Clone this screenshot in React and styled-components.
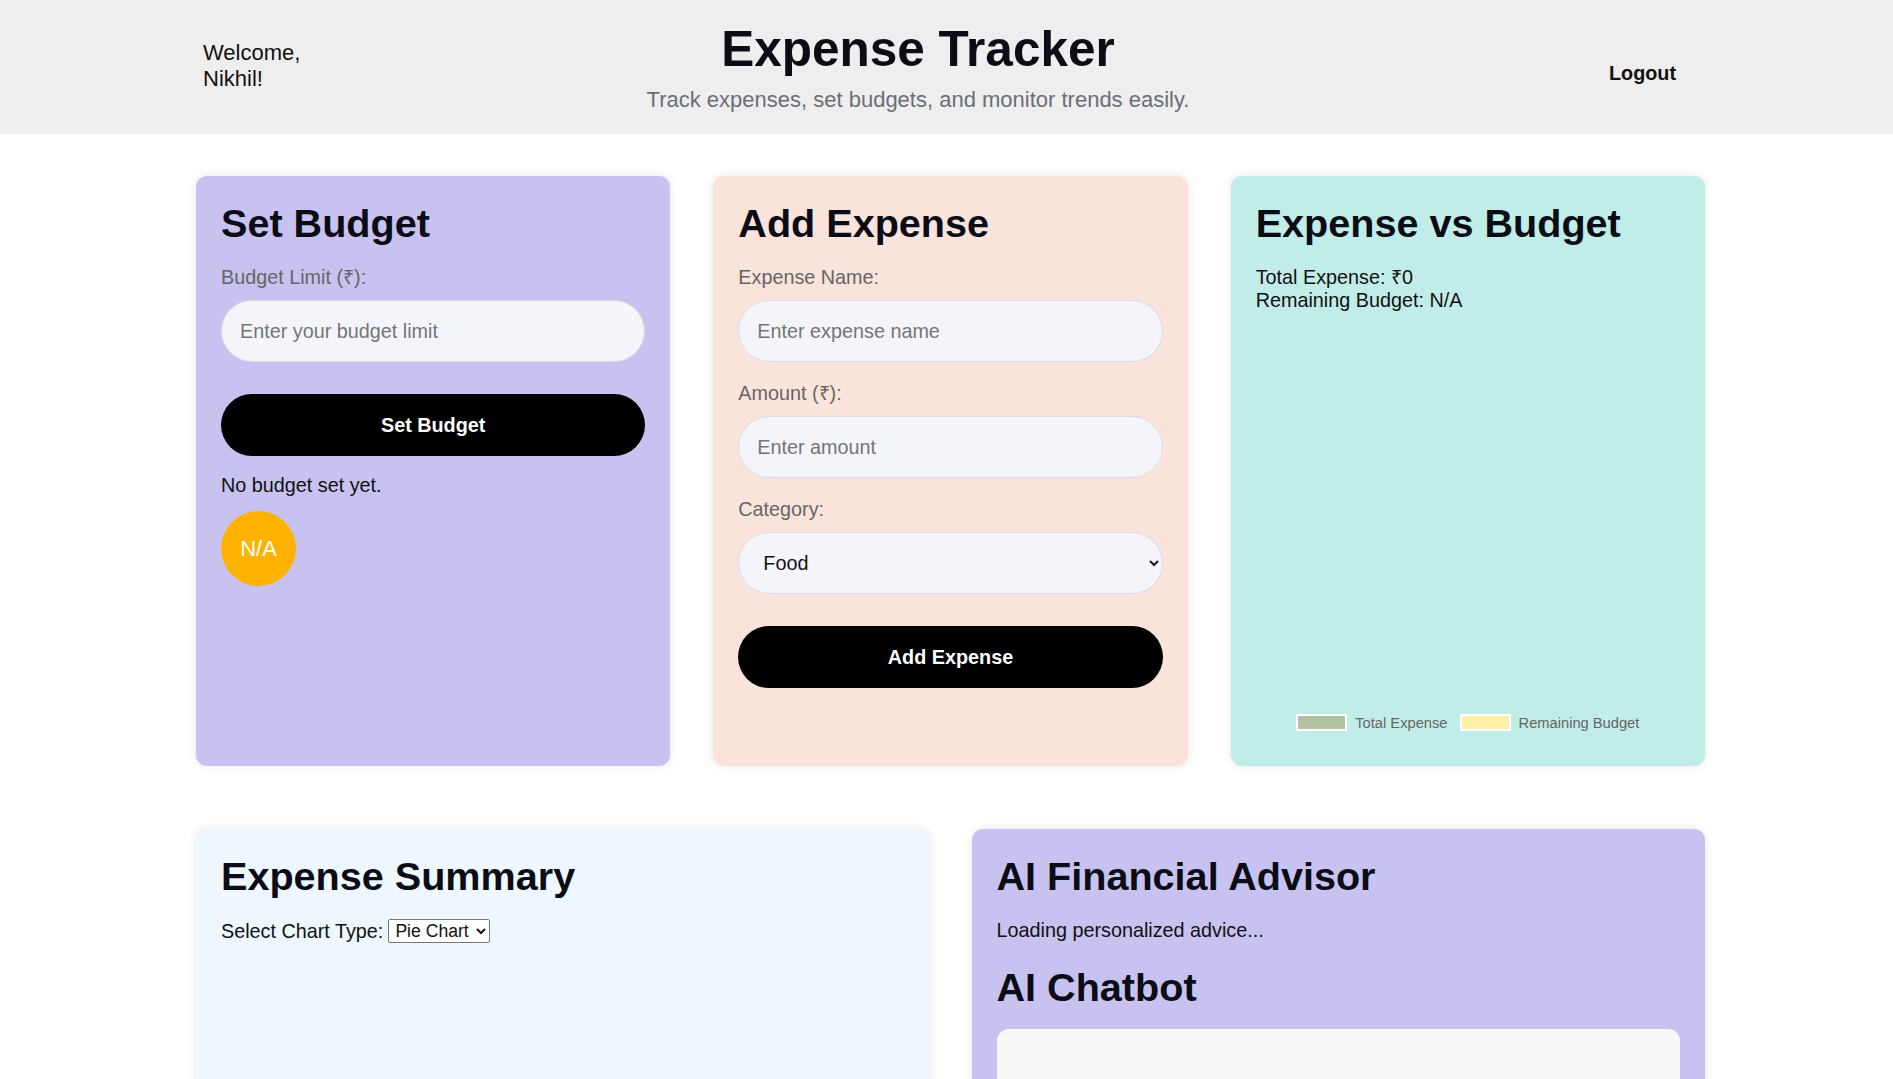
import React, { useState } from "react";
import styled, { createGlobalStyle } from "styled-components";

const GlobalStyle = createGlobalStyle`
  body {
    margin: 0;
    background: #ffffff;
    font-family: "Liberation Sans", Arial, sans-serif;
    color: #111;
  }
  * {
    box-sizing: border-box;
  }
`;

const Header = styled.header`
  display: flex;
  justify-content: space-between;
  align-items: center;
  background: #eeeeee;
  padding: 20px 217px 21px 203px;
`;

const Welcome = styled.div`
  width: 100px;
  margin-top: -2px;
  font-size: 22px;
  line-height: 1.15;
  color: #111;
`;

const TitleBlock = styled.div`
  text-align: center;

  h1 {
    margin: 0 0 10px;
    font-size: 49.5px;
    font-weight: 700;
    color: #0a0d16;
  }
  p {
    margin: 0;
    font-size: 22px;
    color: #6b6e76;
  }
`;

const RightSide = styled.div`
  width: 143px;
  display: flex;
  justify-content: flex-end;
  margin-top: 14px;
`;

const LogoutButton = styled.button`
  background: transparent;
  border: 0;
  padding: 0;
  font-family: inherit;
  font-size: 19.8px;
  font-weight: 700;
  color: #111;
  cursor: pointer;
`;

const Main = styled.main`
  width: 1509px;
  margin-left: 196px;
  padding-top: 42px;
`;

const Row = styled.div`
  display: grid;
  grid-template-columns: repeat(${(p) => p.$cols}, 1fr);
  gap: ${(p) => p.$gap}px;
  margin-bottom: 63px;
`;

const Card = styled.section`
  display: flex;
  flex-direction: column;
  background: ${(p) => p.$bg};
  border-radius: 11px;
  padding: 24px 25px;
  box-shadow: 0 0 10px rgba(0, 0, 0, 0.1);
`;

const CardTitle = styled.h2`
  margin: 0 0 ${(p) => p.$mb ?? 20}px;
  font-size: 39.6px;
  font-weight: 700;
  line-height: 46px;
  color: #0a0d16;
`;

const Label = styled.label`
  display: block;
  font-size: 19.8px;
  line-height: 23px;
  height: 23px;
  color: #666;
  margin-bottom: 11px;
`;

const Input = styled.input`
  width: 100%;
  height: 62px;
  border-radius: 31px;
  border: 1px solid #dcdce4;
  background: #f4f5fa;
  padding: 0 18px;
  font-family: inherit;
  font-size: 19.8px;
  color: #111;
  margin: 0 0 20px;
  outline: none;

  &::placeholder {
    color: #757575;
  }
`;

const Select = styled.select`
  width: 100%;
  height: 62px;
  border-radius: 31px;
  border: 1px solid #dcdce4;
  background: #f4f5fa;
  padding: 0 18px 0 20px;
  font-family: inherit;
  font-size: 19.8px;
  color: #111;
  margin: 0 0 20px;
  outline: none;
`;

const BlackButton = styled.button`
  width: 100%;
  height: 62px;
  margin-top: 12px;
  border: 0;
  border-radius: 31px;
  background: #000;
  color: #fff;
  font-family: inherit;
  font-size: 19.8px;
  font-weight: 700;
  cursor: pointer;
`;

const Text = styled.p`
  margin: ${(p) => p.$margin || "0"};
  font-size: 19.8px;
  color: #111;
  line-height: 23px;
`;

const Badge = styled.div`
  width: 75px;
  height: 75px;
  border-radius: 50%;
  background: #ffb300;
  color: #fff;
  font-size: 22px;
  display: flex;
  align-items: center;
  justify-content: center;
`;

const ChartArea = styled.div`
  height: 430px;
  display: flex;
  align-items: flex-end;
  justify-content: center;
  padding-bottom: 11px;
`;

const Legend = styled.div`
  display: flex;
  align-items: center;
  gap: 12px;
`;

const LegendItem = styled.div`
  display: flex;
  align-items: center;
  gap: 8px;
  font-size: 14.7px;
  color: #666;
`;

const Swatch = styled.span`
  display: block;
  width: 51px;
  height: 17px;
  border: 2px solid #fff;
  background: ${(p) => p.$color};
`;

const ChartTypeRow = styled.div`
  display: flex;
  align-items: center;
  gap: 5px;
  font-size: 19.8px;
  line-height: 23px;
  color: #111;
`;

const SmallSelect = styled.select`
  height: 24px;
  font-family: inherit;
  font-size: 17.6px;
  color: #111;
  background: #fff;
  border: 1px solid #767676;
  border-radius: 2px;
  padding: 0 2px;
`;

const ChatBox = styled.div`
  height: 380px;
  background: #f8f8f8;
  border-radius: 12px;
`;

export default function App() {
  const [category, setCategory] = useState("Food");
  const [chartType, setChartType] = useState("pie");

  return (
    <>
      <GlobalStyle />
      <Header>
        <Welcome>Welcome, Nikhil!</Welcome>
        <TitleBlock>
          <h1>Expense Tracker</h1>
          <p>Track expenses, set budgets, and monitor trends easily.</p>
        </TitleBlock>
        <RightSide>
          <LogoutButton>Logout</LogoutButton>
        </RightSide>
      </Header>

      <Main>
        <Row $cols={3} $gap={43}>
          <Card $bg="#c8c2f0">
            <CardTitle>Set Budget</CardTitle>
            <Label>Budget Limit (₹):</Label>
            <Input type="number" placeholder="Enter your budget limit" />
            <BlackButton>Set Budget</BlackButton>
            <Text $margin="18px 0 14px">No budget set yet.</Text>
            <Badge>N/A</Badge>
          </Card>

          <Card $bg="#f9e3db">
            <CardTitle>Add Expense</CardTitle>
            <Label>Expense Name:</Label>
            <Input type="text" placeholder="Enter expense name" />
            <Label>Amount (₹):</Label>
            <Input type="number" placeholder="Enter amount" />
            <Label>Category:</Label>
            <Select value={category} onChange={(e) => setCategory(e.target.value)}>
              <option>Food</option>
              <option>Transport</option>
              <option>Shopping</option>
              <option>Bills</option>
              <option>Other</option>
            </Select>
            <BlackButton>Add Expense</BlackButton>
          </Card>

          <Card $bg="#c0ede7">
            <CardTitle>Expense vs Budget</CardTitle>
            <Text>
              Total Expense: ₹0
              <br />
              Remaining Budget: N/A
            </Text>
            <ChartArea>
              <Legend>
                <LegendItem>
                  <Swatch $color="#b1c29f" />
                  Total Expense
                </LegendItem>
                <LegendItem>
                  <Swatch $color="#fff0a9" />
                  Remaining Budget
                </LegendItem>
              </Legend>
            </ChartArea>
          </Card>
        </Row>

        <Row $cols={2} $gap={42}>
          <Card $bg="#eef6fe">
            <CardTitle>Expense Summary</CardTitle>
            <ChartTypeRow>
              Select Chart Type:
              <SmallSelect value={chartType} onChange={(e) => setChartType(e.target.value)}>
                <option value="pie">Pie Chart</option>
                <option value="bar">Bar Chart</option>
              </SmallSelect>
            </ChartTypeRow>
          </Card>

          <Card $bg="#c8c2f0">
            <CardTitle>AI Financial Advisor</CardTitle>
            <Text $margin="0 0 22px">Loading personalized advice...</Text>
            <CardTitle $mb={19}>AI Chatbot</CardTitle>
            <ChatBox />
          </Card>
        </Row>
      </Main>
    </>
  );
}
